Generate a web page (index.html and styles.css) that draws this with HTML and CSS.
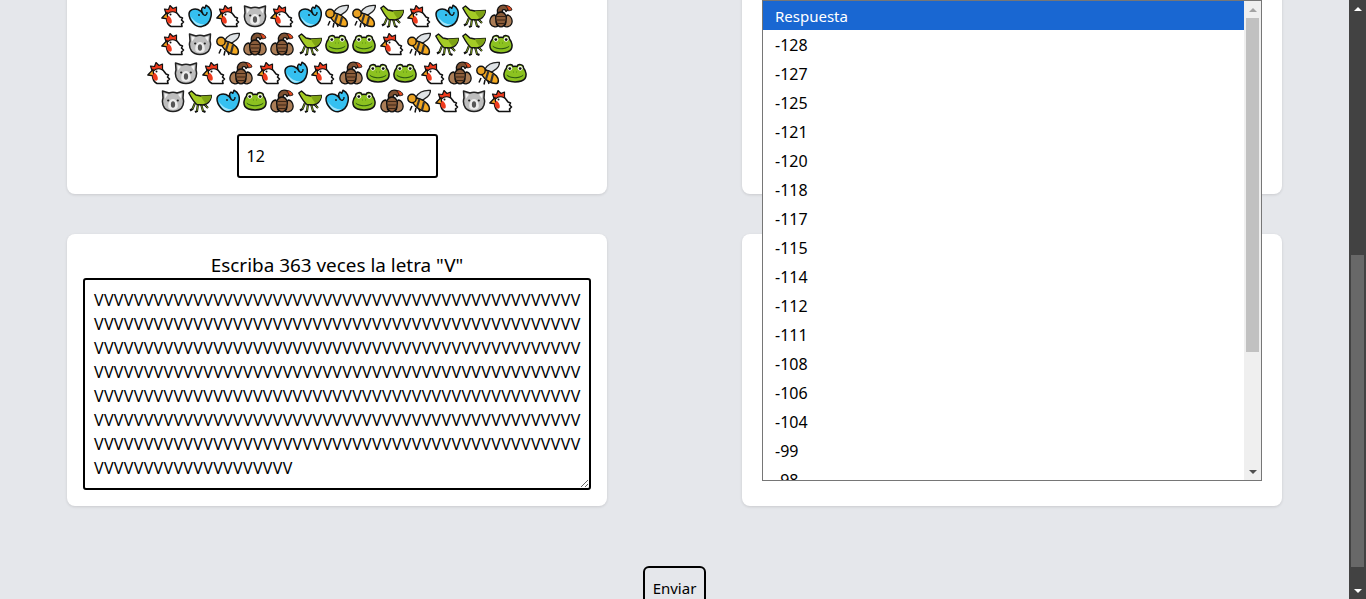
FILE: index.html
```html
<!DOCTYPE html>
<html lang="es">
<head>
    <meta charset="UTF-8">
    <meta name="viewport" content="width=device-width, initial-scale=1.0">
    <title>Formulario</title>
    <link rel="stylesheet" href="styles.css">
</head>
<body>
    <svg class="sprites" aria-hidden="true">
        <symbol id="hen" viewBox="0 0 24 24">
            <path d="M6 9 C8 6 13 6 15 8 C17 10 18 12 19 13 L21.500 14 L20.500 16 L22.500 18 L20.500 20 L21 22.500 L10 22.500 C7 21 5.500 18 5.500 14 Z" fill="#fff" stroke="#111" stroke-width="1.600" stroke-linejoin="round"/>
            <path d="M5 9.500 L3.500 5 L7.500 5.500 L9 1.500 L12 4.500 L15.500 3 L15.500 9 C12 7 9 7.500 6.500 10 Z" fill="#ef3b1d" stroke="#111" stroke-width="1.200" stroke-linejoin="round"/>
            <path d="M6 8.500 L0.800 14 L6.800 14.800 Z" fill="#f8a51d" stroke="#111" stroke-width="1.300" stroke-linejoin="round"/>
            <path d="M5.500 14.500 C5.500 18.500 8.500 21 10.500 19 C11.500 16 9.500 13 7.500 11.500 Z" fill="#ef3b1d"/>
            <circle cx="9.500" cy="10.500" r="1" fill="#111"/>
        </symbol>
        <symbol id="whale" viewBox="0 0 24 24">
            <path d="M1 10 C1 6 6 4 10 5.500 C12.500 6.500 14 8 15 10 C13.500 7.500 13 4.500 15 3 L16.800 4.300 L18 1.200 C22.500 3 24 8 23 12.500 C22 18 18 22 13 22.800 C7 22.800 1 16 1 10 Z" fill="#35c0f0" stroke="#111" stroke-width="1.500" stroke-linejoin="round"/>
            <path d="M2.800 12.500 C6 17.500 11 20.500 16.500 20.500 C13.500 22.300 9 22 6.500 19 C5 17 3.500 15 2.800 12.500 Z" fill="#a6e6fa"/>
            <path d="M15 10 C16.500 12.300 19.500 11.300 19 8" fill="none" stroke="#111" stroke-width="1.300"/>
            <circle cx="11" cy="11" r="0.900" fill="#111"/>
        </symbol>
        <symbol id="bee" viewBox="0 0 24 24">
            <path d="M9 8 C12 3 18 1 23.500 1.500 C23.500 6 19 10.500 13 11.500 Z" fill="#dfe3e6" stroke="#222" stroke-width="1.300" stroke-linejoin="round"/>
            <path d="M5 17 L3 21.500 M9 19 L8 23.500 M12 20 L13 23" stroke="#111" stroke-width="1.500"/>
            <path d="M6 10 C10 8 16 10 20.500 15 C23 18 23 22 20.500 22.500 C16 23 9 19.500 6 14 Z" fill="#f3a81f" stroke="#111" stroke-width="1.500"/>
            <path d="M12.500 10 L10 18 M17 13 L15 21" stroke="#333" stroke-width="2.200"/>
            <circle cx="5" cy="9.500" r="4.200" fill="#e9a224" stroke="#111" stroke-width="1.400"/>
        </symbol>
        <symbol id="hopper" viewBox="0 0 24 24">
            <path d="M7 14 L4.500 20 L2 21.500 M10 15 L9 22 L7 23 M13 15 L15 22 L17.500 23 M15 14 L20 19" fill="none" stroke="#111" stroke-width="2.200"/>
            <path d="M7 14 L4.500 20 M10 15 L9 22 M13 15 L15 22 M15 14 L20 19" fill="none" stroke="#8db51d" stroke-width="0.800"/>
            <path d="M0.800 4 L3.500 2 L8 6 L13 7 L23.500 6.500 C23 11 20 15 15 16 L9 15.500 C5.500 13 3.500 9 0.800 4 Z" fill="#a4cb25" stroke="#111" stroke-width="1.400" stroke-linejoin="round"/>
            <path d="M13 7 L23.500 6.500 C23 10 21 13 18 14.500 C16 12.500 14 10 13 7 Z" fill="#7ea314"/>
        </symbol>
        <symbol id="scorpion" viewBox="0 0 24 24">
            <path d="M6 11 C1.500 11 0 17 1.500 20 C3 23 7 23.500 9 22 C7 20 6.500 18 8 16 Z M18 11 C22.500 11 24 17 22.500 20 C21 23 17 23.500 15 22 C17 20 17.500 18 16 16 Z" fill="#ab7d56" stroke="#111" stroke-width="1.300" stroke-linejoin="round"/>
            <path d="M8.500 9 C7.500 5 10 1.200 14 1.200 C17 1.200 19 2.500 20 5 L17 7.500 C16.500 5.500 14.500 5 13.500 6.200 C12.800 7.200 13.500 8.500 15 10 Z" fill="#7e5132" stroke="#111" stroke-width="1.300" stroke-linejoin="round"/>
            <path d="M16.500 1.500 C20 1.500 22.500 3 23 6 L19.500 7 C19 5 18 3.500 16.500 1.500 Z" fill="#e2491f" stroke="#111" stroke-width="0.800"/>
            <path d="M12 8 C7.500 8 6 13 7 17 C8 21 10 22.800 12 22.800 C14 22.800 16 21 17 17 C18 13 16.500 8 12 8 Z" fill="#8a5c3a" stroke="#111" stroke-width="1.300"/>
            <path d="M7.500 12.500 H16.500 M7.500 16 H16.500 M9 19.500 H15" stroke="#3a2414" stroke-width="1"/>
        </symbol>
        <symbol id="koala" viewBox="0 0 24 24">
            <path d="M1.500 2 L8 4 C10.500 3 13.500 3 16 4 L22.500 2 L22 9 C23 12 22.500 16 20.500 19 C17 23.500 7 23.500 3.500 19 C1.500 16 1 12 2 9 Z" fill="#bdbdbd" stroke="#222" stroke-width="1.500" stroke-linejoin="round"/>
            <path d="M3.500 4.500 L7 5.500 L4 9.500 Z M20.500 4.500 L17 5.500 L20 9.500 Z" fill="#f2f2f2"/>
            <path d="M12 10 C15.500 10 17.500 15 16.500 18.500 C15 21.500 9 21.500 7.500 18.500 C6.500 15 8.500 10 12 10 Z" fill="#ececec"/>
            <ellipse cx="12" cy="15.500" rx="2.100" ry="3.200" fill="#555"/>
            <circle cx="7.200" cy="11.500" r="1.100" fill="#222"/>
            <circle cx="16.800" cy="11.500" r="1.100" fill="#222"/>
        </symbol>
        <symbol id="frog" viewBox="0 0 24 24">
            <path d="M3.500 7 C3.500 3 9 2.500 10 5.500 C11 5.300 13 5.300 14 5.500 C15 2.500 20.500 3 20.500 7 C23 10 24 14.500 22 17.500 C19 22 5 22 2 17.500 C0 14.500 1 10 3.500 7 Z" fill="#8cc220" stroke="#111" stroke-width="1.500" stroke-linejoin="round"/>
            <circle cx="6.800" cy="7.300" r="2.400" fill="#fff"/>
            <circle cx="17.200" cy="7.300" r="2.400" fill="#fff"/>
            <circle cx="6.800" cy="7.600" r="1.400" fill="#111"/>
            <circle cx="17.200" cy="7.600" r="1.400" fill="#111"/>
            <path d="M3.500 13.500 C8 17 16 17 20.500 13.500 C19.500 18.500 4.500 18.500 3.500 13.500 Z" fill="#2c5a12"/>
            <path d="M10.500 11 H11 M13 11 H13.500" stroke="#2c5a12" stroke-width="1"/>
        </symbol>
    </svg>

    <div class="page">
        <main class="content">
            <div class="cards">
                <section class="card card-emoji">
                    <div class="emoji-row">
                        <svg class="emoji"><use href="#bee"/></svg><svg class="emoji"><use href="#frog"/></svg><svg class="emoji"><use href="#koala"/></svg><svg class="emoji"><use href="#frog"/></svg><svg class="emoji"><use href="#hen"/></svg><svg class="emoji"><use href="#koala"/></svg><svg class="emoji"><use href="#hopper"/></svg><svg class="emoji"><use href="#scorpion"/></svg><svg class="emoji"><use href="#koala"/></svg><svg class="emoji"><use href="#koala"/></svg><svg class="emoji"><use href="#hen"/></svg><svg class="emoji"><use href="#whale"/></svg><svg class="emoji"><use href="#frog"/></svg>
                    </div>
                    <div class="emoji-row">
                        <svg class="emoji"><use href="#hen"/></svg><svg class="emoji"><use href="#whale"/></svg><svg class="emoji"><use href="#hen"/></svg><svg class="emoji"><use href="#koala"/></svg><svg class="emoji"><use href="#hen"/></svg><svg class="emoji"><use href="#whale"/></svg><svg class="emoji"><use href="#bee"/></svg><svg class="emoji"><use href="#bee"/></svg><svg class="emoji"><use href="#hopper"/></svg><svg class="emoji"><use href="#hen"/></svg><svg class="emoji"><use href="#whale"/></svg><svg class="emoji"><use href="#hopper"/></svg><svg class="emoji"><use href="#scorpion"/></svg>
                    </div>
                    <div class="emoji-row">
                        <svg class="emoji"><use href="#hen"/></svg><svg class="emoji"><use href="#koala"/></svg><svg class="emoji"><use href="#bee"/></svg><svg class="emoji"><use href="#scorpion"/></svg><svg class="emoji"><use href="#scorpion"/></svg><svg class="emoji"><use href="#hopper"/></svg><svg class="emoji"><use href="#frog"/></svg><svg class="emoji"><use href="#frog"/></svg><svg class="emoji"><use href="#hen"/></svg><svg class="emoji"><use href="#bee"/></svg><svg class="emoji"><use href="#hopper"/></svg><svg class="emoji"><use href="#hopper"/></svg><svg class="emoji"><use href="#frog"/></svg>
                    </div>
                    <div class="emoji-row">
                        <svg class="emoji"><use href="#hen"/></svg><svg class="emoji"><use href="#koala"/></svg><svg class="emoji"><use href="#hen"/></svg><svg class="emoji"><use href="#scorpion"/></svg><svg class="emoji"><use href="#hen"/></svg><svg class="emoji"><use href="#whale"/></svg><svg class="emoji"><use href="#hen"/></svg><svg class="emoji"><use href="#scorpion"/></svg><svg class="emoji"><use href="#frog"/></svg><svg class="emoji"><use href="#frog"/></svg><svg class="emoji"><use href="#hen"/></svg><svg class="emoji"><use href="#scorpion"/></svg><svg class="emoji"><use href="#bee"/></svg><svg class="emoji"><use href="#frog"/></svg>
                    </div>
                    <div class="emoji-row">
                        <svg class="emoji"><use href="#koala"/></svg><svg class="emoji"><use href="#hopper"/></svg><svg class="emoji"><use href="#whale"/></svg><svg class="emoji"><use href="#frog"/></svg><svg class="emoji"><use href="#scorpion"/></svg><svg class="emoji"><use href="#hopper"/></svg><svg class="emoji"><use href="#whale"/></svg><svg class="emoji"><use href="#frog"/></svg><svg class="emoji"><use href="#scorpion"/></svg><svg class="emoji"><use href="#bee"/></svg><svg class="emoji"><use href="#hen"/></svg><svg class="emoji"><use href="#koala"/></svg><svg class="emoji"><use href="#hen"/></svg>
                    </div>
                    <input class="answer-input" type="text" value="12">
                </section>

                <section class="card card-blank"></section>

                <section class="card">
                    <h2 class="card-title">Escriba 363 veces la letra "V"</h2>
                    <textarea class="answer-text" id="letters" spellcheck="false"></textarea>
                </section>

                <section class="card card-select">
                    <div class="listbox">
                        <ul class="listbox-items">
                            <li class="selected">Respuesta</li>
                            <li>-128</li>
                            <li>-127</li>
                            <li>-125</li>
                            <li>-121</li>
                            <li>-120</li>
                            <li>-118</li>
                            <li>-117</li>
                            <li>-115</li>
                            <li>-114</li>
                            <li>-112</li>
                            <li>-111</li>
                            <li>-108</li>
                            <li>-106</li>
                            <li>-104</li>
                            <li>-99</li>
                            <li>-98</li>
                        </ul>
                        <div class="scrollbar scrollbar-light">
                            <span class="arrow arrow-up"></span>
                            <div class="thumb"></div>
                            <span class="arrow arrow-down"></span>
                        </div>
                    </div>
                </section>
            </div>
            <div class="actions">
                <button class="send-btn" type="button">Enviar</button>
            </div>
        </main>
        <div class="scrollbar scrollbar-dark">
            <span class="arrow arrow-up"></span>
            <div class="thumb"></div>
            <span class="arrow arrow-down"></span>
        </div>
    </div>
    <script src="script.js"></script>
</body>
</html>
```

FILE: styles.css
```css
* {
    box-sizing: border-box;
}
html, body {
    margin: 0;
    height: 100%;
    overflow: hidden;
}
body {
    background-color: #e5e7eb;
    color: #000;
    font-family: "Noto Sans", Arial, sans-serif;
    font-size: 16px;
}
.sprites {
    display: none;
}
.page {
    display: flex;
    height: 599px;
    overflow: hidden;
}
/* the page is scrolled down: the first row of cards starts above the window */
.content {
    flex: 1;
    margin-top: -100px;
    padding: 0 67px;
}
.cards {
    display: grid;
    grid-template-columns: 540px 540px;
    grid-template-rows: 294px 272px;
    column-gap: 135px;
    row-gap: 40px;
}
.card {
    background-color: #fff;
    border-radius: 8px;
    box-shadow: 0 1px 3px rgba(0, 0, 0, 0.12);
    padding: 16px;
}
.card-emoji {
    display: flex;
    flex-direction: column;
    align-items: center;
    justify-content: flex-end;
}
.emoji-row {
    display: flex;
    justify-content: center;
    margin-bottom: 4.4px;
}
.emoji {
    width: 24px;
    height: 24px;
    margin: 0 1.7px;
}
.answer-input {
    width: 201px;
    height: 44px;
    margin-top: 16.6px;
    padding: 0 8px;
    border: 2px solid #000;
    border-radius: 3px;
    font: inherit;
    outline: none;
}
.card-title {
    margin: 0;
    padding-top: 2px;
    font-size: 18.9px;
    font-weight: 400;
    line-height: 26px;
    text-align: center;
}
.answer-text {
    display: block;
    width: 508px;
    height: 212px;
    padding: 8px 8px 8px 9px;
    border: 2px solid #000;
    border-radius: 3px;
    font: inherit;
    line-height: 24px;
    letter-spacing: 0.33px;
    outline: none;
}
.card-select {
    position: relative;
}
.listbox {
    position: absolute;
    top: -234px;
    left: 20px;
    display: flex;
    width: 500px;
    height: 481px;
    background-color: #fff;
    border: 1px solid #767676;
}
.listbox-items {
    flex: 1;
    margin: 0;
    padding: 0;
    list-style: none;
    overflow: hidden;
}
.listbox-items li {
    height: 29px;
    padding: 1px 12px 0;
    line-height: 28px;
}
.listbox-items .selected {
    background-color: #1967d2;
    color: #fff;
    font-size: 15px;
}
.actions {
    display: flex;
    justify-content: center;
    margin-top: 60px;
}
.send-btn {
    width: 63px;
    height: 44px;
    padding: 0;
    background-color: transparent;
    border: 2px solid #000;
    border-radius: 6px;
    color: #000;
    font: inherit;
    font-size: 15px;
}
.scrollbar {
    display: flex;
    flex: none;
    flex-direction: column;
    align-items: center;
    width: 17px;
}
.scrollbar-dark {
    background-color: #424242;
}
.scrollbar-dark .thumb {
    width: 13px;
    height: 312px;
    margin-top: 238px;
    background-color: #686868;
}
.scrollbar-light {
    background-color: #efefef;
}
.scrollbar-light .thumb {
    width: 13px;
    height: 334px;
    background-color: #c1c1c1;
}
.arrow {
    display: block;
    flex: none;
    width: 0;
    height: 0;
    border-left: 4px solid transparent;
    border-right: 4px solid transparent;
}
.arrow-up {
    margin: 7px 0 6px;
    border-bottom: 4px solid #a3a3a3;
}
.arrow-down {
    margin-top: auto;
    margin-bottom: 6px;
    border-top: 4px solid #505050;
}
.scrollbar-dark .arrow-up {
    border-bottom-color: #fff;
}
.scrollbar-dark .arrow-down {
    border-top-color: #fff;
}
```

FILE: script.js
```js
// the answer typed into the textarea: 363 times the letter
document.getElementById('letters').value = 'V'.repeat(363);
```
